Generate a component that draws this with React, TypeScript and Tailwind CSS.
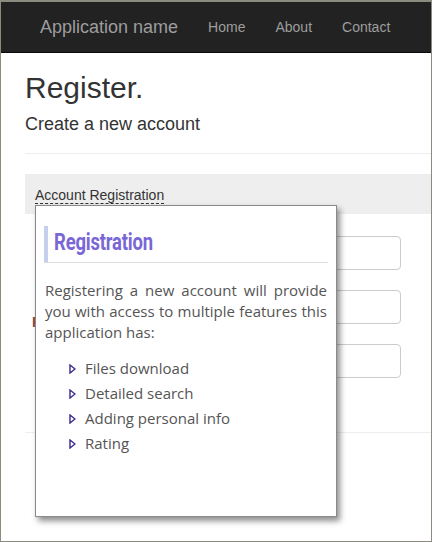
import React from "react";

const features = ["Files download", "Detailed search", "Adding personal info", "Rating"];

function Bullet() {
  return (
    <svg width="7" height="10" viewBox="0 0 7 10" className="shrink-0" aria-hidden>
      <path d="M1 1 L6 5 L1 9 Z" fill="none" stroke="#3b2a8c" strokeWidth="1.4" strokeLinejoin="miter" />
    </svg>
  );
}

function RegistrationTip() {
  return (
    <div className="absolute left-[34px] top-[203px] h-[312px] w-[302px] border border-[#8a8a8a] bg-white px-[8px] pt-[20px] shadow-[3px_4px_6px_rgba(0,0,0,0.45)]">
      <div className="flex h-[36px] items-center border-l-[4px] border-[#c5cfee] pl-[6px] pb-[2px]">
        <span
          className="inline-block origin-left scale-x-[0.8] text-[23px] font-bold tracking-[-0.2px] text-[#7a67d6]"
          style={{ fontFamily: 'Roboto, "Noto Sans", sans-serif' }}
        >
          Registration
        </span>
      </div>
      <div className="h-px bg-[#dcdcdc]" />
      <p
        className="mt-[17px] px-[1px] text-justify text-[15px] leading-[21px] text-[#555]"
        style={{ fontFamily: '"Open Sans", sans-serif' }}
      >
        Registering a new account will provide you with access to multiple features this application has:
      </p>
      <ul className="mt-[13px] flex flex-col pl-[25px]" style={{ fontFamily: '"Open Sans", sans-serif' }}>
        {features.map((f) => (
          <li key={f} className="flex h-[25px] items-center gap-[9px] text-[15px] text-[#555]">
            <Bullet />
            {f}
          </li>
        ))}
      </ul>
    </div>
  );
}

export default function App() {
  return (
    <div
      className="relative h-[542px] w-[432px] overflow-hidden border border-t-2 border-[#8b8b7e] bg-white"
      style={{ fontFamily: '"Liberation Sans", Arial, sans-serif' }}
    >
      <nav className="flex h-[51px] items-center border-b border-[#080808] bg-[#222] pl-[39px]">
        <span className="text-[18px] text-[#9d9d9d]">Application name</span>
        <div className="ml-[30px] flex gap-[30px] text-[14px] text-[#9d9d9d]">
          <span>Home</span>
          <span>About</span>
          <span>Contact</span>
        </div>
      </nav>

      <div className="pl-[24px]">
        <h2 className="mt-[18px] text-[30px] leading-[33px] text-[#333]">Register.</h2>
        <h4 className="mt-[10px] text-[18px] leading-[20px] text-[#333]">Create a new account</h4>
        <div className="mt-[19px] h-px bg-[#eee]" />

        <div className="mt-[20px] flex h-[40px] items-center bg-[#eee] pl-[10px] pt-[3px]">
          <span className="border-b border-dashed border-[#333] text-[14px] leading-[16px] text-[#333]">
            Account Registration
          </span>
        </div>

        <div className="relative mt-[22px] flex flex-col items-end gap-[20px] pr-[30px]">
          <div className="h-[34px] w-[240px] rounded-[4px] border border-[#ccc]" />
          <div className="h-[34px] w-[240px] rounded-[4px] border border-[#ccc]" />
          <div className="h-[34px] w-[240px] rounded-[4px] border border-[#ccc]" />
          <span className="absolute left-[7px] top-[76px] text-[14px] font-bold text-[#8a4b3f]">Register</span>
        </div>

        <div className="mt-[54px] h-px bg-[#eee]" />
      </div>

      <RegistrationTip />
    </div>
  );
}
